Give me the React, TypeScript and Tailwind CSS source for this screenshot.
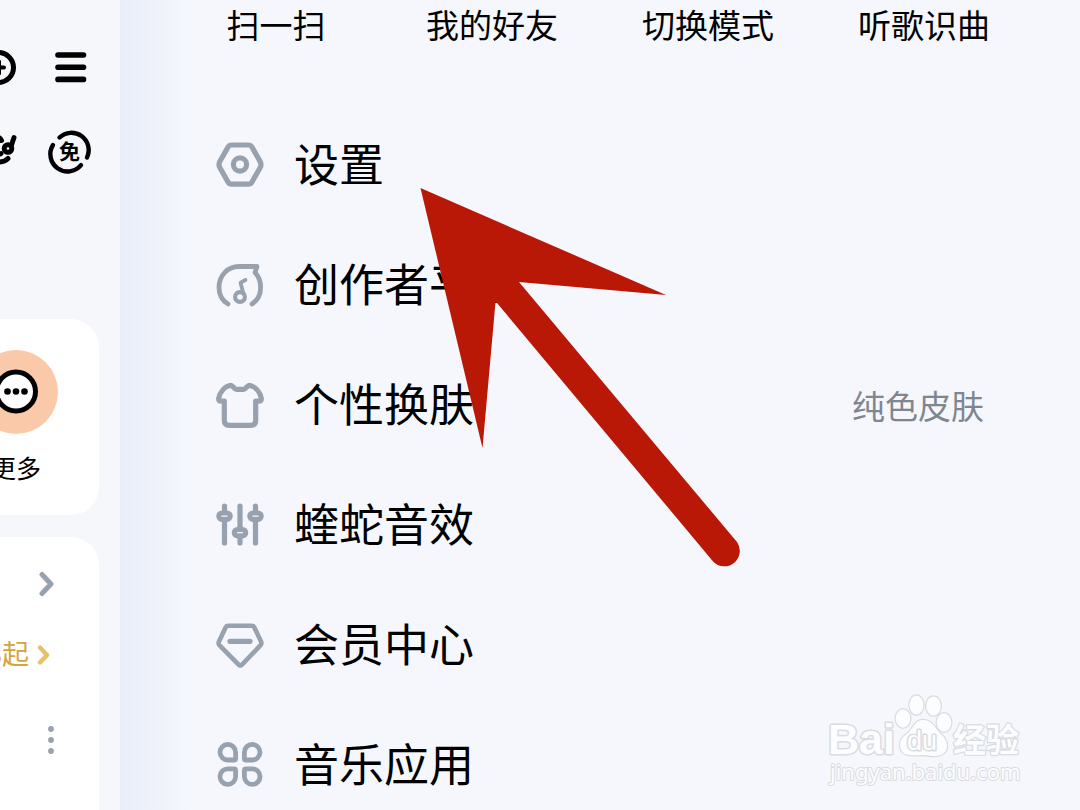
import React from 'react';

type IconProps = { children: React.ReactNode };

const LineIcon: React.FC<IconProps> = ({ children }) => (
  <svg
    viewBox="0 0 48 48"
    className="w-12 h-12 shrink-0 text-[#98a2af]"
    fill="none"
    stroke="currentColor"
    strokeWidth="5.2"
    strokeLinecap="round"
    strokeLinejoin="round"
    aria-hidden="true"
  >
    {children}
  </svg>
);

const SettingsIcon = () => (
  <LineIcon>
    <path d="M15.5 4H32.5Q34.8 4 36 6.1L44.2 20.6Q45.8 23.5 44.2 26.4L36 41Q34.8 43.2 32.5 43.2H15.5Q13.2 43.2 12 41L3.8 26.4Q2.2 23.5 3.8 20.6L12 6.1Q13.2 4 15.5 4Z" />
    <circle cx="24" cy="23.5" r="6.6" />
  </LineIcon>
);

const CreatorIcon = () => (
  <LineIcon>
    <path d="M12 43C6 39.5 3 33 3 26.5C3 14 12 5.5 23 5.5H41L39 11.5C43 15.5 44.6 21 44.6 26.5C44.6 33 41.5 39.5 36 43" strokeWidth="4.8" />
    <circle cx="24" cy="36" r="4.9" strokeWidth="4.2" />
    <path d="M27.5 33L24.5 21.6L29.5 19" strokeWidth="3.8" />
  </LineIcon>
);

const SkinIcon = () => (
  <LineIcon>
    <path d="M14.8 4.3C16.5 4 18 8.3 20.5 8.3H27.5C30 8.3 31.5 4 33.2 4.3C39.5 5.5 44 11 45.3 17.3Q45.7 20.2 42.8 20.2H39.7V39.5Q39.7 44.3 34.8 44.3H13.2Q8.3 44.3 8.3 39.5V20.2H5.2Q2.3 20.2 2.7 17.3C4 11 8.5 5.5 14.8 4.3Z" />
  </LineIcon>
);

const EffectIcon = () => (
  <LineIcon>
    <path d="M8.5 5V42M24 5V42M39.5 5V42" />
    <g className="fill-[#f5f7fd]">
      <rect x="2.8" y="12" width="11.4" height="6.4" rx="3.2" />
      <rect x="18.3" y="28.5" width="11.4" height="6.4" rx="3.2" />
      <rect x="33.8" y="12" width="11.4" height="6.4" rx="3.2" />
    </g>
  </LineIcon>
);

const MemberIcon = () => (
  <LineIcon>
    <path d="M12.2 4.8H35.8Q37.6 4.8 38.4 6.6L45 20.5Q46 22.7 44.4 24.4L26 43.6Q24.3 45.4 22.6 43.6L3.6 24.4Q2 22.7 3 20.5L9.6 6.6Q10.4 4.8 12.2 4.8Z" strokeWidth="4.6" />
    <path d="M14 20.3H34" />
  </LineIcon>
);

const AppsIcon = () => (
  <LineIcon>
    <g strokeWidth="4.8">
      <path d="M19.6 11.3V17.4Q19.6 19 18 19H12.2A7.8 7.8 0 1 1 19.6 11.3Z" />
      <path d="M28.4 11.3V17.4Q28.4 19 30 19H35.8A7.8 7.8 0 1 0 28.4 11.3Z" />
      <path d="M19.6 35.5V29.4Q19.6 27.8 18 27.8H12.2A7.8 7.8 0 1 0 19.6 35.5Z" />
      <path d="M28.4 35.5V29.4Q28.4 27.8 30 27.8H35.8A7.8 7.8 0 1 1 28.4 35.5Z" />
    </g>
  </LineIcon>
);

const quickActions = ['扫一扫', '我的好友', '切换模式', '听歌识曲'];

const menuItems = [
  { label: '设置', icon: <SettingsIcon /> },
  { label: '创作者平台', icon: <CreatorIcon /> },
  { label: '个性换肤', icon: <SkinIcon />, value: '纯色皮肤' },
  { label: '蝰蛇音效', icon: <EffectIcon /> },
  { label: '会员中心', icon: <MemberIcon /> },
  { label: '音乐应用', icon: <AppsIcon /> },
];

const topIcon = 'block w-12 h-12 shrink-0';

// Sliver of the home page that stays visible beside the open drawer
const HomePeek = () => (
  <aside className="w-[120px] shrink-0 overflow-hidden bg-[#f5f7fb] pt-11 flex flex-col">
    <div className="flex justify-end gap-6 pr-[25px]">
      <button type="button" aria-label="添加" className={topIcon}>
        <svg viewBox="0 0 48 48" fill="none" stroke="#000" strokeWidth="5" strokeLinecap="round">
          <circle cx="23.5" cy="23.5" r="15" />
          <path d="M18 23.5H29M24 17.5V29.5" strokeWidth="4" />
        </svg>
      </button>
      <button type="button" aria-label="菜单" className={topIcon}>
        <svg viewBox="0 0 48 48" fill="none" stroke="#000" strokeWidth="5.6" strokeLinecap="round">
          <path d="M11 11H36.5M11 23.2H36.5M11 35.4H36.5" />
        </svg>
      </button>
    </div>

    <div className="flex justify-end gap-6 pr-[26px] mt-9">
      <button type="button" aria-label="音乐" className={topIcon}>
        <svg viewBox="0 0 48 48" fill="none" stroke="#000" strokeWidth="5" strokeLinecap="round" strokeLinejoin="round">
          <circle cx="34" cy="20.5" r="3.8" />
          <path d="M37.5 17L40 9.5" />
          <path d="M22 9Q26 9 27.5 12.5M34 30.5Q30 34.5 23 34M24 27L27 25.5" />
        </svg>
      </button>
      <button type="button" aria-label="免费模式" className={topIcon}>
        <svg viewBox="0 0 48 48" fill="none">
          <g stroke="#000" strokeWidth="4.4" strokeLinecap="round">
            <path d="M13.5 9.5A17.3 17.3 0 0 1 41 29.5" />
            <path d="M35 37.2A17.3 17.3 0 0 1 7 17" />
          </g>
          <text
            x="23.5"
            y="31"
            textAnchor="middle"
            className="fill-black text-[21px] font-bold font-['Noto_Sans_CJK_SC',sans-serif]"
          >
            免
          </text>
        </svg>
      </button>
    </div>

    {/* Shortcut card */}
    <div className="mt-[143px] mr-[21px] h-[196px] shrink-0 bg-white rounded-r-[28px] flex justify-end pr-[41px] pt-[31px]">
      <button type="button" className="w-[84px] shrink-0 flex flex-col items-center gap-[17px]">
        <span className="w-[84px] h-[84px] rounded-full bg-[#fac9a9] flex items-center justify-center">
          <svg viewBox="0 0 46 46" className="w-[46px] h-[46px]" aria-hidden="true">
            <circle cx="23" cy="22.5" r="19.5" fill="#fff" stroke="#000" strokeWidth="5" />
            <circle cx="14.5" cy="22.5" r="3.3" />
            <circle cx="23" cy="22.5" r="3.3" />
            <circle cx="31.5" cy="22.5" r="3.3" />
          </svg>
        </span>
        <span className="text-[25px] leading-8 whitespace-nowrap">更多</span>
      </button>
    </div>

    {/* Playlist card */}
    <div className="mt-[22px] mr-[21px] flex-1 bg-white rounded-tr-[28px] flex flex-col items-end pt-[31px]">
      <button type="button" aria-label="查看更多" className="mr-11">
        <svg viewBox="0 0 16 32" className="w-4 h-8" fill="none" stroke="#98a2af" strokeWidth="5" strokeLinecap="round" strokeLinejoin="round">
          <path d="M3 6.5L12 16L3 25.5" />
        </svg>
      </button>
      <button type="button" className="mt-[39px] mr-12 flex items-center gap-2 text-[27px] leading-7 text-[#d4a53c] whitespace-nowrap">
        <span className="pb-1">8起</span>
        <svg viewBox="0 0 14 32" className="w-[14px] h-8" fill="none" stroke="#e6c06c" strokeWidth="4.4" strokeLinecap="round" strokeLinejoin="round">
          <path d="M3 8.5L10 16L3 23.5" />
        </svg>
      </button>
      <button type="button" aria-label="更多操作" className="mt-[53px] mr-10">
        <svg viewBox="0 0 16 32" className="w-4 h-8" fill="#98a2af">
          <circle cx="8" cy="5" r="2.9" />
          <circle cx="8" cy="16" r="2.9" />
          <circle cx="8" cy="27" r="2.9" />
        </svg>
      </button>
    </div>
  </aside>
);

const Watermark = () => (
  <svg
    viewBox="0 0 200 100"
    className="absolute right-[54px] bottom-5 w-[200px] h-[100px] pointer-events-none"
    fill="#fcfdff"
    stroke="#d9dbe0"
    strokeWidth="2.4"
    strokeLinejoin="round"
    paintOrder="stroke"
    aria-hidden="true"
  >
    <text x="2" y="64" strokeWidth="3" className="text-[43px] font-bold font-['Liberation_Sans',sans-serif]">Bai</text>
    <g strokeWidth="2.4">
      <ellipse cx="77" cy="28.5" rx="7.3" ry="9.3" />
      <ellipse cx="90.5" cy="15" rx="7" ry="9.5" />
      <ellipse cx="107.5" cy="16" rx="7.3" ry="9.5" />
      <ellipse cx="118" cy="32.5" rx="7.3" ry="9.3" />
      <path d="M97 30C105 30 108 36 113 42C118 47 121 50 121 56C121 63 115 66 108 66C103 66 101 65 97 65C92 65 89 66 84 65C78 65 74 61 74 55C74 49 78 46 83 42C88 37 89 30 97 30Z" />
    </g>
    <text x="81" y="60" strokeWidth="3" className="text-[27px] font-['Liberation_Sans',sans-serif]">du</text>
    <text x="127" y="62" className="text-[33px] font-bold font-['Noto_Sans_CJK_SC',sans-serif]">经验</text>
    <text x="4" y="90" strokeWidth="2" className="text-[22px] font-['Noto_Sans',sans-serif]">jingyan.baidu.com</text>
  </svg>
);

export default function App() {
  return (
    <div className="relative h-screen overflow-hidden flex bg-[#f5f7fd] text-black font-['Noto_Sans_CJK_SC',sans-serif]">
      <HomePeek />

      <main className="flex-1 min-w-0 px-12 bg-linear-to-r from-[#e9edf8] to-[#f5f7fd] to-[70px]">
        <div className="grid grid-cols-4 h-[105px] items-start">
          {quickActions.map((label) => (
            <button key={label} type="button" className="text-[33px] leading-[48px] whitespace-nowrap">
              {label}
            </button>
          ))}
        </div>

        <nav className="px-12">
          {menuItems.map((item) => (
            <button key={item.label} type="button" className="w-full h-[120px] flex items-center gap-[30px] text-left">
              {item.icon}
              <span className="flex-1 pb-1 text-[45px] leading-[60px] whitespace-nowrap">{item.label}</span>
              {item.value && <span className="text-[33px] leading-[48px] text-[#80868f]">{item.value}</span>}
            </button>
          ))}
        </nav>
      </main>

      {/* Arrow pointing at the settings entry */}
      <svg viewBox="0 0 322 380" className="absolute left-[420px] top-[188px] w-[322px] h-[380px] pointer-events-none" aria-hidden="true">
        <path
          d="M0.5 0L246 107L99 94L317 354A15.5 15.5 0 0 1 293.5 374L77 115L75.5 114L62.5 260Z"
          fill="#ba1807"
        />
      </svg>

      <Watermark />
    </div>
  );
}
